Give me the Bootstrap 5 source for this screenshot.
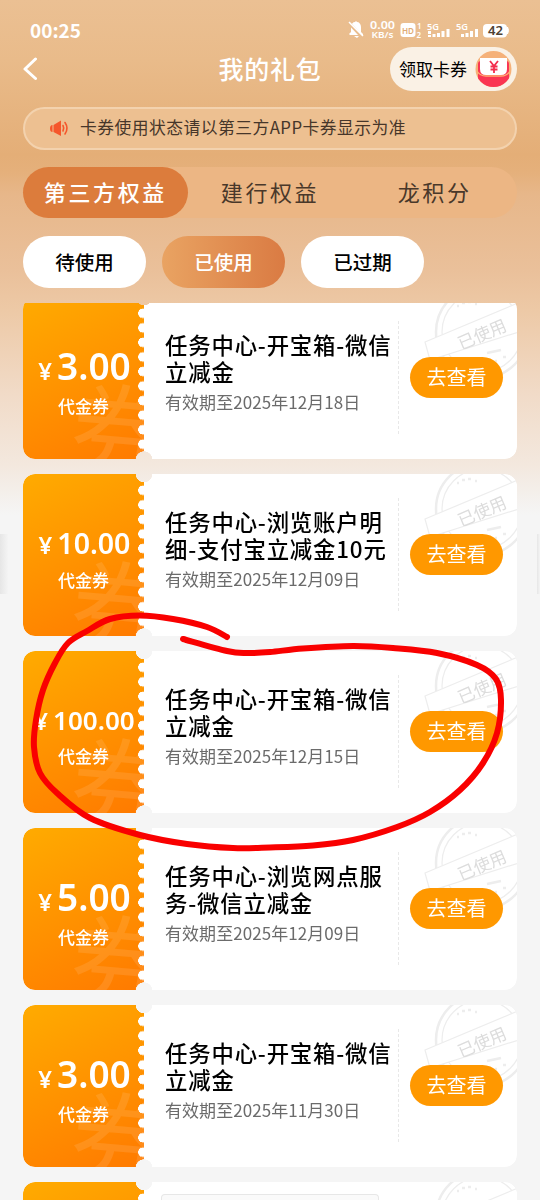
<!DOCTYPE html>
<html lang="zh-CN">
<head>
<meta charset="utf-8">
<meta name="viewport" content="width=device-width, initial-scale=1">
<title>我的礼包</title>
<link href="https://cdn.jsdelivr.net/npm/bootstrap@5.3.0/dist/css/bootstrap.min.css" rel="stylesheet">
<style>
body{font-family:"Noto Sans","Noto Sans CJK SC",sans-serif;background:#f5f5f5;color:#000}
.screen{width:540px;height:1200px;background:linear-gradient(180deg,#ebc093 0,#e9bb8a 60px,#e4ae77 155px,#e5b07b 172px,#e7b78a 195px,#eac09a 270px,#edc9a6 310px,#f1dbc8 395px,#f3e8de 465px,#f5f5f5 515px)}
.cjk{font-family:"Noto Sans CJK SC",sans-serif}
.status{height:47px;padding:14px 30px 0;font-weight:600}
.clock{font-size:19px;line-height:31px;letter-spacing:0}
.topbar{height:44px;margin:0 23px}
.topbar h1{font-size:25px;letter-spacing:.8px;font-weight:500;line-height:42px;height:44px}
.claim{width:127px;height:44px;background:#faf1e5;font-size:17px;padding-left:9px;right:0;top:0}
.notice{height:43px;margin:16px 23px 0;border:2px solid #f3d2ae;background:#edc091;font-size:16.8px;letter-spacing:.46px;color:#46362a;padding:0 0 1px 24px}
.tabs{height:51px;margin:17px 23px 0;background:#ecb684;font-size:22px;letter-spacing:2.6px;color:#49382a}
.tabs>div{flex:1;line-height:49px}
.tabs .on{background:#dc7c3c;color:#fff;font-weight:500}
.filters{margin:18px 23px 0;gap:16px}
.filters .pill{width:123px;height:52px;line-height:51px;font-size:19.5px;background:#fff;font-weight:500}
.filters .on{background:linear-gradient(90deg,#e9a362,#da7b43);color:#fff}
.list{margin:14.5px 23px 0;height:897.5px}
.coupon{height:162.5px;margin-bottom:14.5px;border-radius:12px;background:#fff;
-webkit-mask:radial-gradient(circle 8.5px at 121px 0,transparent 95%,#000) top/100% 51% no-repeat,radial-gradient(circle 8.5px at 121px 100%,transparent 95%,#000) bottom/100% 51% no-repeat}
.coupon:first-child{margin-top:-5.9px}
.stub{width:121px;padding:4px 0 0;background:linear-gradient(155deg,#ffab00,#ff7a00);color:#fff}
.stub:after{content:"";position:absolute;right:0;top:9px;bottom:8px;width:6px;background:radial-gradient(circle 5px at 5px 7.3px,#fff 92%,transparent) 0 0/6px 14.55px}
.wm{left:49px;top:72px;font-size:98px;line-height:110px;color:rgba(255,255,255,.1);transform:rotate(5deg)}
.price{font-weight:600;white-space:nowrap;margin-left:2px}
.price small{font-size:24px;margin-right:5px}
.kind{font-size:17px;line-height:24px;font-weight:500}
.info{width:254px;padding:34px 0 0 21px}
.info h2{font-size:22.4px;line-height:27px;font-weight:500;letter-spacing:.82px;margin:0;white-space:nowrap}
.info p{font-size:17px;line-height:24px;color:#6b6b6b;margin:5.500px 0 0;white-space:nowrap;letter-spacing:.06px}
.rule{height:113px;margin-top:24px;border-left:1px dashed #e8e8e8}
.go{width:93px;height:40.500px;margin:60.500px 0 0 11px;background:#ff9800;color:#fff;font-size:20px;line-height:39px}
.stamp{right:0;top:0}
.scribble{left:0;top:0;pointer-events:none}
.handle{left:161px;top:1194px;width:218px;height:6px;border:1px solid #e7e7e7;border-bottom:0;border-radius:4px 4px 0 0;background:#fafafa}
.edge{top:534px;height:60px;width:8px;background:linear-gradient(90deg,#e6e6e6,#f4f4f4)}
</style>
</head>
<body>
<div class="screen position-relative overflow-hidden">
  <div class="status d-flex justify-content-between text-white">
    <div class="clock cjk">00:25</div>
    <svg width="162" height="22" viewBox="350 18 162 22" style="margin:4px 0 0" fill="#fff" font-family="Noto Sans" font-weight="600">
      <path d="M352 35h13v-1l-2-2v-5c0-3-2-5-4-5l-1-1-1 1c-2 0-4 2-4 5v5l-2 2zM356 36h5l-2 2z"/>
      <path d="M351 23l13 14" stroke="#e9bd8e" stroke-width="3"/><path d="M351 22l14 14" stroke="#fff" stroke-width="1.5"/>
      <text x="372" y="29" font-size="10.5" textLength="25" lengthAdjust="spacingAndGlyphs">0.00</text><text x="373.500" y="38.300" font-size="9" textLength="22" lengthAdjust="spacingAndGlyphs">KB/s</text>
      <rect x="402.500" y="23" width="15" height="14" rx="3"/><text x="404" y="33.700" font-size="9" fill="#dfab74" textLength="12" lengthAdjust="spacingAndGlyphs">HD</text>
      <text x="419" y="28.500" font-size="8">1</text><text x="418.500" y="37.500" font-size="8">2</text>
      <text x="429" y="29.500" font-size="8.500" textLength="12" lengthAdjust="spacingAndGlyphs">5G</text><text x="458" y="29.500" font-size="8.500" textLength="12" lengthAdjust="spacingAndGlyphs">5G</text>
      <path transform="translate(2)" d="M428 31h3v3h-3zM428 35h3v2h-3zM432.500 34h3v3h-3zM437 33h3v4h-3zM441.500 31h3v6h-3zM446.500 29h3v8h-3zM461 34h3v3h-3zM465.500 33h3v4h-3zM470 31h3v6h-3zM475 29h3v8h-3z"/>
      <rect x="485" y="24" width="24" height="13.500" rx="4"/><path d="M509.500 27q2 3.500 0 7z" stroke="#fff"/>
      <text x="490" y="35" font-size="12" fill="#4e4132" textLength="15" lengthAdjust="spacingAndGlyphs">42</text>
    </svg>
  </div>
  <div class="topbar position-relative d-flex align-items-center justify-content-center cjk">
    <svg class="position-absolute start-0" width="16" height="26" fill="none" stroke="#fff" stroke-width="3" stroke-linecap="round" stroke-linejoin="round"><path d="M12.500 3L2 13l10.500 9.500"/></svg>
    <h1 class="text-white m-0">我的礼包</h1>
    <div class="claim position-absolute rounded-pill d-flex align-items-center">领取卡券
      <svg class="ms-2" width="38" height="38" viewBox="0 0 38 38"><defs><clipPath id="coin"><circle cx="18.500" cy="19" r="18"/></clipPath></defs><g clip-path="url(#coin)"><path fill="#f5b179" d="M0 0h38v38H0z"/><path fill="#fa3552" d="M3 14q0-3 3-3h25q3 0 3 3v24H3z"/><path fill="#fff" d="M5 8h27v11q0 6-6 6H11q-6 0-6-6z"/><path d="M2 21q3 5 9 5h15q6 0 9-5" fill="none" stroke="#ffb072" stroke-width="1.300"/><path d="M15 11l4 5 4-5M19 16v7M15.500 16.500h7M15.500 19.500h7" fill="none" stroke="#f32c4c" stroke-width="1.800"/></g></svg>
    </div>
  </div>
  <div class="notice rounded-pill d-flex align-items-center cjk">
    <svg class="flex-shrink-0" style="margin-right:9px" width="22" height="18" viewBox="0 0 22 18"><path d="M3.500 6v7Q1 13 1 9.500T3.500 6zM4.500 6L12 1.500v15.500l-7.500-4z" fill="#f5572c"/><path d="M14 6.500q1.500 2.800 0 5.500M16 3.500q4 5.700 0 11.500" fill="none" stroke="#f5572c" stroke-width="1.600" stroke-linecap="round"/></svg>
    <span>卡券使用状态请以第三方APP卡券显示为准</span>
  </div>
  <div class="tabs rounded-pill d-flex text-center cjk"><div class="on rounded-pill">第三方权益</div><div>建行权益</div><div>龙积分</div></div>
  <div class="filters d-flex text-center cjk"><div class="pill rounded-pill">待使用</div><div class="pill on rounded-pill">已使用</div><div class="pill rounded-pill">已过期</div></div>
  <div class="list overflow-hidden" id="list"></div>
  <div class="edge position-absolute start-0"></div>
  <div class="edge position-absolute" style="left:537px;width:3px"></div>
  <svg class="scribble position-absolute" width="540" height="1200"><path id="loop" fill="none" stroke="#f90000" stroke-width="6" stroke-linecap="round" stroke-linejoin="round"/></svg>
  <div class="handle position-absolute"></div>
</div>
<script>
const coupons = [
  ["3.00", 37, "任务中心-开宝箱-微信", "立减金", "2025年12月18日"],
  ["10.00", 28.5, "任务中心-浏览账户明", "细-支付宝立减金10元", "2025年12月09日"],
  ["100.00", 26, "任务中心-开宝箱-微信", "立减金", "2025年12月15日"],
  ["5.00", 37, "任务中心-浏览网点服", "务-微信立减金", "2025年12月09日"],
  ["3.00", 37, "任务中心-开宝箱-微信", "立减金", "2025年11月30日"],
  ["3.00", 37, "任务中心-开宝箱-微信", "立减金", "2025年11月30日"]
];
document.getElementById("list").innerHTML = coupons.map(([amount, size, a, b, date]) => `
<div class="coupon d-flex position-relative overflow-hidden">
  <div class="stub position-relative overflow-hidden d-flex flex-column align-items-center justify-content-center flex-shrink-0">
    <div class="wm position-absolute cjk">券</div>
    <div class="price" style="font-size:${size}px;line-height:${size > 30 ? 47 : 42}px;margin-bottom:${size > 30 ? 0 : 2}px"><small>¥</small>${amount}</div>
    <div class="kind cjk">代金券</div>
  </div>
  <div class="info cjk"><h2>${a}<br>${b}</h2><p>有效期至${date}</p></div>
  <div class="rule"></div>
  <svg class="stamp position-absolute" width="100" height="86" fill="none" stroke="#ededed">
    <circle cx="65" cy="35" r="46" stroke-width="2.500"/><circle cx="65" cy="35" r="40" stroke-width="1.200"/>
    <path d="M40 9h2M45 6h3M51 5h3M58 7h2M78 64h2M86 60h3M70 56l14-3" stroke-width="2.500"/>
    <path d="M8 45L108 3v30L13 63z" fill="#fff" stroke-width="1.200"/>
    <text x="65" y="43.500" transform="rotate(-23 65 37)" text-anchor="middle" font-family="Noto Sans CJK SC" font-size="17" fill="#dcdcdc" stroke="none">已使用</text>
  </svg>
  <div class="go rounded-pill text-center position-relative cjk">去查看</div>
</div>`).join("");

// Freehand loop: smooth curve through the sampled pen positions
const pts = [[227,637],[207,627],[173,619],[140,615.5],[110,619],[87,631],[68,643],[55,663],[43,690],[36,720],[34,747],[40,773],[57,793],[90,818],[140,835],[187,844],[233,848],[270,847.5],[313,845.5],[353,840],[397,827],[430,812],[460,790],[483,763],[497,733],[501,700],[496,679],[477,665],[437,653],[393,648],[353,646],[303,648.5],[270,652],[247,653],[227,651],[183,639]];
let d = "M" + pts[0];
for (let i = 0; i < pts.length - 1; i++) {
  const p = pts[i - 1] || pts[i], q = pts[i], r = pts[i + 1], s = pts[i + 2] || r;
  d += `C${q[0] + (r[0] - p[0]) / 6},${q[1] + (r[1] - p[1]) / 6} ${r[0] - (s[0] - q[0]) / 6},${r[1] - (s[1] - q[1]) / 6} ${r}`;
}
document.getElementById("loop").setAttribute("d", d);
</script>
<script src="https://cdn.jsdelivr.net/npm/bootstrap@5.3.0/dist/js/bootstrap.bundle.min.js"></script>
</body>
</html>
